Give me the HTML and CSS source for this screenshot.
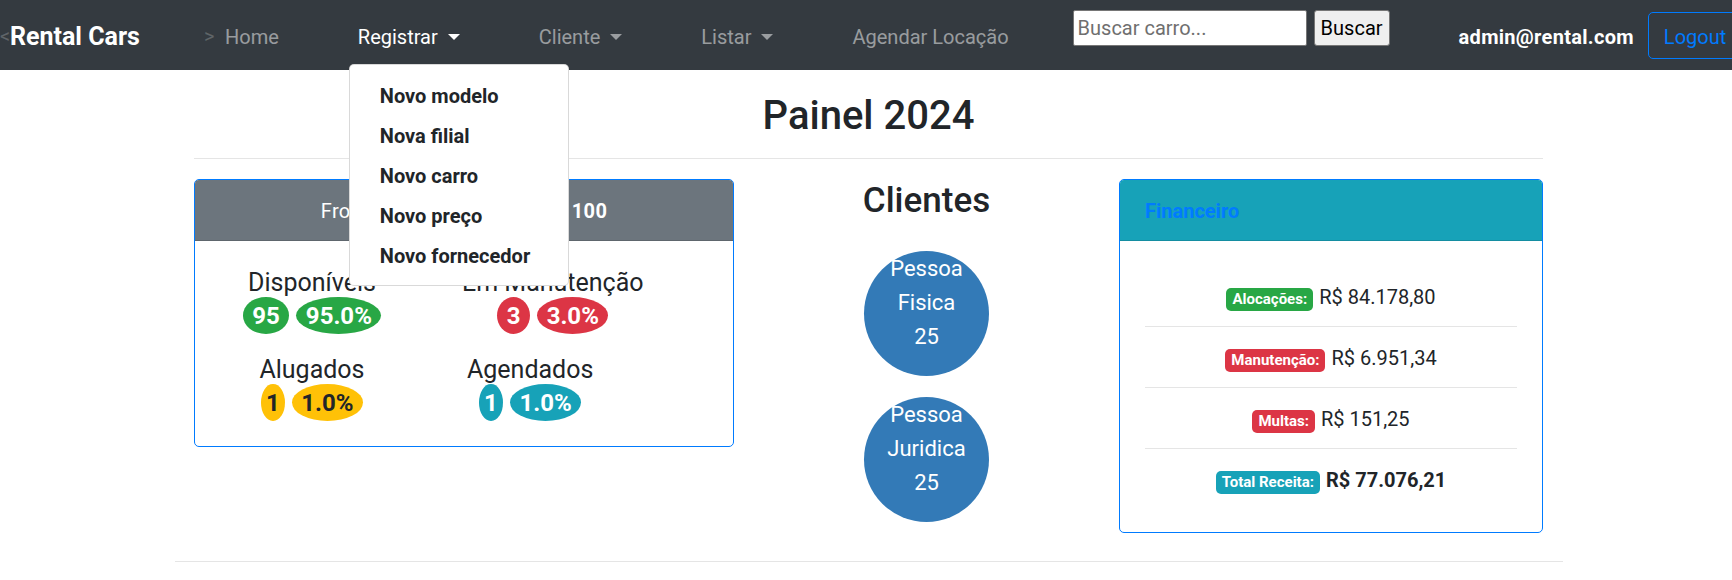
FILE: index.html
```html
<!DOCTYPE html>
<html lang="pt-BR">
<head>
<meta charset="utf-8">
<title>Rental Cars - Painel</title>
<link rel="stylesheet" href="styles.css">
</head>
<body>
<nav class="navbar">
  <span class="stray">&lt;</span>
  <a class="brand" href="#">Rental Cars</a>
  <span class="stray">&gt;</span>
  <ul class="nav-list">
    <li class="nav-item"><a class="nav-link" href="#">Home</a></li>
    <li class="nav-item">
      <a class="nav-link active caret" href="#">Registrar</a>
      <div class="dropdown-menu">
        <a class="dropdown-item" href="#">Novo modelo</a>
        <a class="dropdown-item" href="#">Nova filial</a>
        <a class="dropdown-item" href="#">Novo carro</a>
        <a class="dropdown-item" href="#">Novo preço</a>
        <a class="dropdown-item" href="#">Novo fornecedor</a>
      </div>
    </li>
    <li class="nav-item"><a class="nav-link caret" href="#">Cliente</a></li>
    <li class="nav-item"><a class="nav-link caret" href="#">Listar</a></li>
    <li class="nav-item"><a class="nav-link" href="#">Agendar Locação</a></li>
  </ul>
  <form class="search">
    <input class="search-input" type="text" placeholder="Buscar carro...">
    <button class="search-btn" type="button">Buscar</button>
  </form>
  <span class="user">admin@rental.com</span>
  <button class="logout" type="button">Logout</button>
</nav>

<main class="main">
  <h2 class="title">Painel 2024</h2>
  <div class="rule"></div>
  <div class="dash">
    <section class="card">
      <div class="card-header card-header-gray">Frota Total de Automóveis: <strong>100</strong></div>
      <div class="fleet-body">
        <div class="stat stat-left">
          <div class="stat-label">Disponíveis</div>
          <div class="stat-badges"><span class="pill pill-success">95</span><span class="pill pill-success">95.0%</span></div>
        </div>
        <div class="stat stat-right">
          <div class="stat-label">Em Manutenção</div>
          <div class="stat-badges"><span class="pill pill-danger">3</span><span class="pill pill-danger">3.0%</span></div>
        </div>
        <div class="stat stat-left">
          <div class="stat-label">Alugados</div>
          <div class="stat-badges"><span class="pill pill-warning pill-narrow">1</span><span class="pill pill-warning">1.0%</span></div>
        </div>
        <div class="stat stat-right stat-shift">
          <div class="stat-label">Agendados</div>
          <div class="stat-badges"><span class="pill pill-info pill-narrow">1</span><span class="pill pill-info">1.0%</span></div>
        </div>
      </div>
    </section>

    <section class="clients">
      <h3 class="clients-title">Clientes</h3>
      <div class="bubble">Pessoa<br>Fisica<br>25</div>
      <div class="bubble">Pessoa<br>Juridica<br>25</div>
    </section>

    <section class="card">
      <div class="card-header card-header-info">Financeiro</div>
      <div class="fin-body">
        <div class="fin-row"><span class="tag tag-success">Alocações:</span>R$ 84.178,80</div>
        <div class="fin-sep"></div>
        <div class="fin-row"><span class="tag tag-danger">Manutenção:</span>R$ 6.951,34</div>
        <div class="fin-sep"></div>
        <div class="fin-row"><span class="tag tag-danger">Multas:</span>R$ 151,25</div>
        <div class="fin-sep"></div>
        <div class="fin-row"><span class="tag tag-info">Total Receita:</span><strong class="total">R$ 77.076,21</strong></div>
      </div>
    </section>
  </div>
</main>
<div class="footer-rule"></div>
</body>
</html>
```

FILE: styles.css
```css
* { box-sizing: border-box; }

html, body { margin: 0; padding: 0; }

body {
  font-family: Roboto, "Liberation Sans", Arial, sans-serif;
  font-size: 20px;
  line-height: 30px;
  color: #212529;
  background: #fff;
  overflow-x: hidden;
}

a { text-decoration: none; }

/* ---------- navbar ---------- */
.navbar {
  position: relative;
  z-index: 10;
  display: flex;
  align-items: center;
  height: 70px;
  background: #343a40;
}
.navbar > * { flex-shrink: 0; }

.stray {
  width: 10px;
  color: rgba(255, 255, 255, 0.22);
  font-size: 20px;
  padding-top: 2px;
}

.brand {
  width: 194px;
  padding-top: 3px;
  font-size: 25px;
  line-height: 37px;
  font-weight: 700;
  color: #fff;
  white-space: nowrap;
}

.nav-list {
  display: flex;
  gap: 59px;
  margin: 0 0 0 1px;
  padding: 0;
  list-style: none;
}
.nav-item { position: relative; }

.nav-link {
  display: block;
  padding: 12px 10px 8px;
  color: rgba(255, 255, 255, 0.5);
  white-space: nowrap;
}
.nav-link.active { color: #fff; }

.caret::after {
  content: "";
  display: inline-block;
  margin-left: 10px;
  vertical-align: 4px;
  border-top: 6px solid;
  border-left: 6px solid transparent;
  border-right: 6px solid transparent;
}

.dropdown-menu {
  position: absolute;
  top: 54px;
  left: 1px;
  min-width: 220px;
  padding: 10px 0;
  background: #fff;
  border: 1px solid rgba(0, 0, 0, 0.15);
  border-radius: 5px;
}
.dropdown-item {
  display: block;
  padding: 6px 30px 4px;
  font-weight: 700;
  color: #212529;
  white-space: nowrap;
}

.search {
  display: flex;
  gap: 7px;
  align-self: flex-start;
  margin: 10px 0 0 54px;
}
.search-input {
  width: 234px;
  height: 36px;
  padding: 0 4px;
  font-family: inherit;
  font-size: 20px;
  color: #212529;
  background: #fff;
  border: 1px solid #767676;
  border-radius: 2px;
}
.search-input::placeholder { color: #6f6f6f; }
.search-btn {
  width: 76px;
  height: 36px;
  padding: 0;
  font-family: inherit;
  font-size: 20px;
  color: #000;
  background: #efefef;
  border: 1px solid #767676;
  border-radius: 3px;
}

.user {
  margin-left: 69px;
  padding-top: 3px;
  font-weight: 700;
  color: #fff;
  letter-spacing: 0.3px;
}

.logout {
  margin-left: 14px;
  padding: 9px 15px 6px;
  font-family: inherit;
  font-size: 20px;
  line-height: 30px;
  color: #007bff;
  background: transparent;
  border: 1px solid #007bff;
  border-radius: 5px;
}

/* ---------- main ---------- */
.main {
  width: 1349px;
  margin-left: 194px;
}

.title {
  margin: 22px 0 0;
  font-size: 40px;
  line-height: 48px;
  font-weight: 500;
  text-align: center;
}

.rule {
  border-top: 1px solid rgba(0, 0, 0, 0.1);
  margin: 18px 0 20px;
}

.dash {
  display: grid;
  grid-template-columns: 540px 385px 424px;
  align-items: start;
}

.card {
  background: #fff;
  border: 1px solid #007bff;
  border-radius: 5px;
  overflow: hidden;
}
.card-header {
  padding: 16px 25px 14px;
  line-height: 30px;
  border-bottom: 1px solid rgba(0, 0, 0, 0.125);
}
.card-header-gray {
  background: #6c757d;
  color: #fff;
  text-align: center;
  letter-spacing: 0.3px;
}
.card-header-info {
  background: #17a2b8;
  color: #007bff;
  font-weight: 700;
}

/* fleet */
.fleet-body {
  display: grid;
  grid-template-columns: 184px auto;
  justify-content: start;
  column-gap: 58px;
  row-gap: 20px;
  padding: 26px 25px 25px;
}
.stat { text-align: center; }
.stat-right { justify-self: start; }
.stat-shift { margin-left: 5px; }
.stat-label {
  padding-top: 2px;
  font-size: 25px;
  line-height: 28px;
}
.stat-badges {
  display: flex;
  justify-content: center;
  gap: 7px;
}
.pill {
  display: inline-block;
  padding: 6.5px 9.6px;
  font-size: 24px;
  line-height: 24px;
  font-weight: 700;
  color: #fff;
  border-radius: 50%;
}
.pill-narrow { padding-left: 5px; padding-right: 5px; }
.pill-success { background: #28a745; }
.pill-danger { background: #dc3545; }
.pill-warning { background: #ffc107; color: #212529; }
.pill-info { background: #17a2b8; }

/* clients */
.clients { text-align: center; }
.clients-title {
  margin: 0 0 30px;
  padding-top: 2px;
  font-size: 35px;
  line-height: 40px;
  font-weight: 500;
}
.bubble {
  width: 125px;
  height: 125px;
  margin: 0 auto;
  padding-top: 1px;
  border-radius: 50%;
  background: #337ab7;
  color: #fff;
  font-size: 22px;
  line-height: 34px;
}
.bubble + .bubble { margin-top: 21px; }

/* finance */
.fin-body {
  padding: 41px 25px 37px;
  text-align: center;
}
.fin-row { line-height: 30px; }
.fin-sep {
  border-top: 1px solid rgba(0, 0, 0, 0.1);
  margin: 14px 0 16px;
}
.tag {
  display: inline-block;
  margin-right: 6px;
  padding: 3.75px 6px;
  font-size: 15px;
  line-height: 15px;
  font-weight: 700;
  color: #fff;
  border-radius: 5px;
}
.tag-success { background: #28a745; }
.tag-danger { background: #dc3545; }
.tag-info { background: #17a2b8; }
.total { font-weight: 700; }

.footer-rule {
  width: 1388px;
  margin: 28px 0 0 175px;
  border-top: 1px solid rgba(0, 0, 0, 0.1);
}
```
